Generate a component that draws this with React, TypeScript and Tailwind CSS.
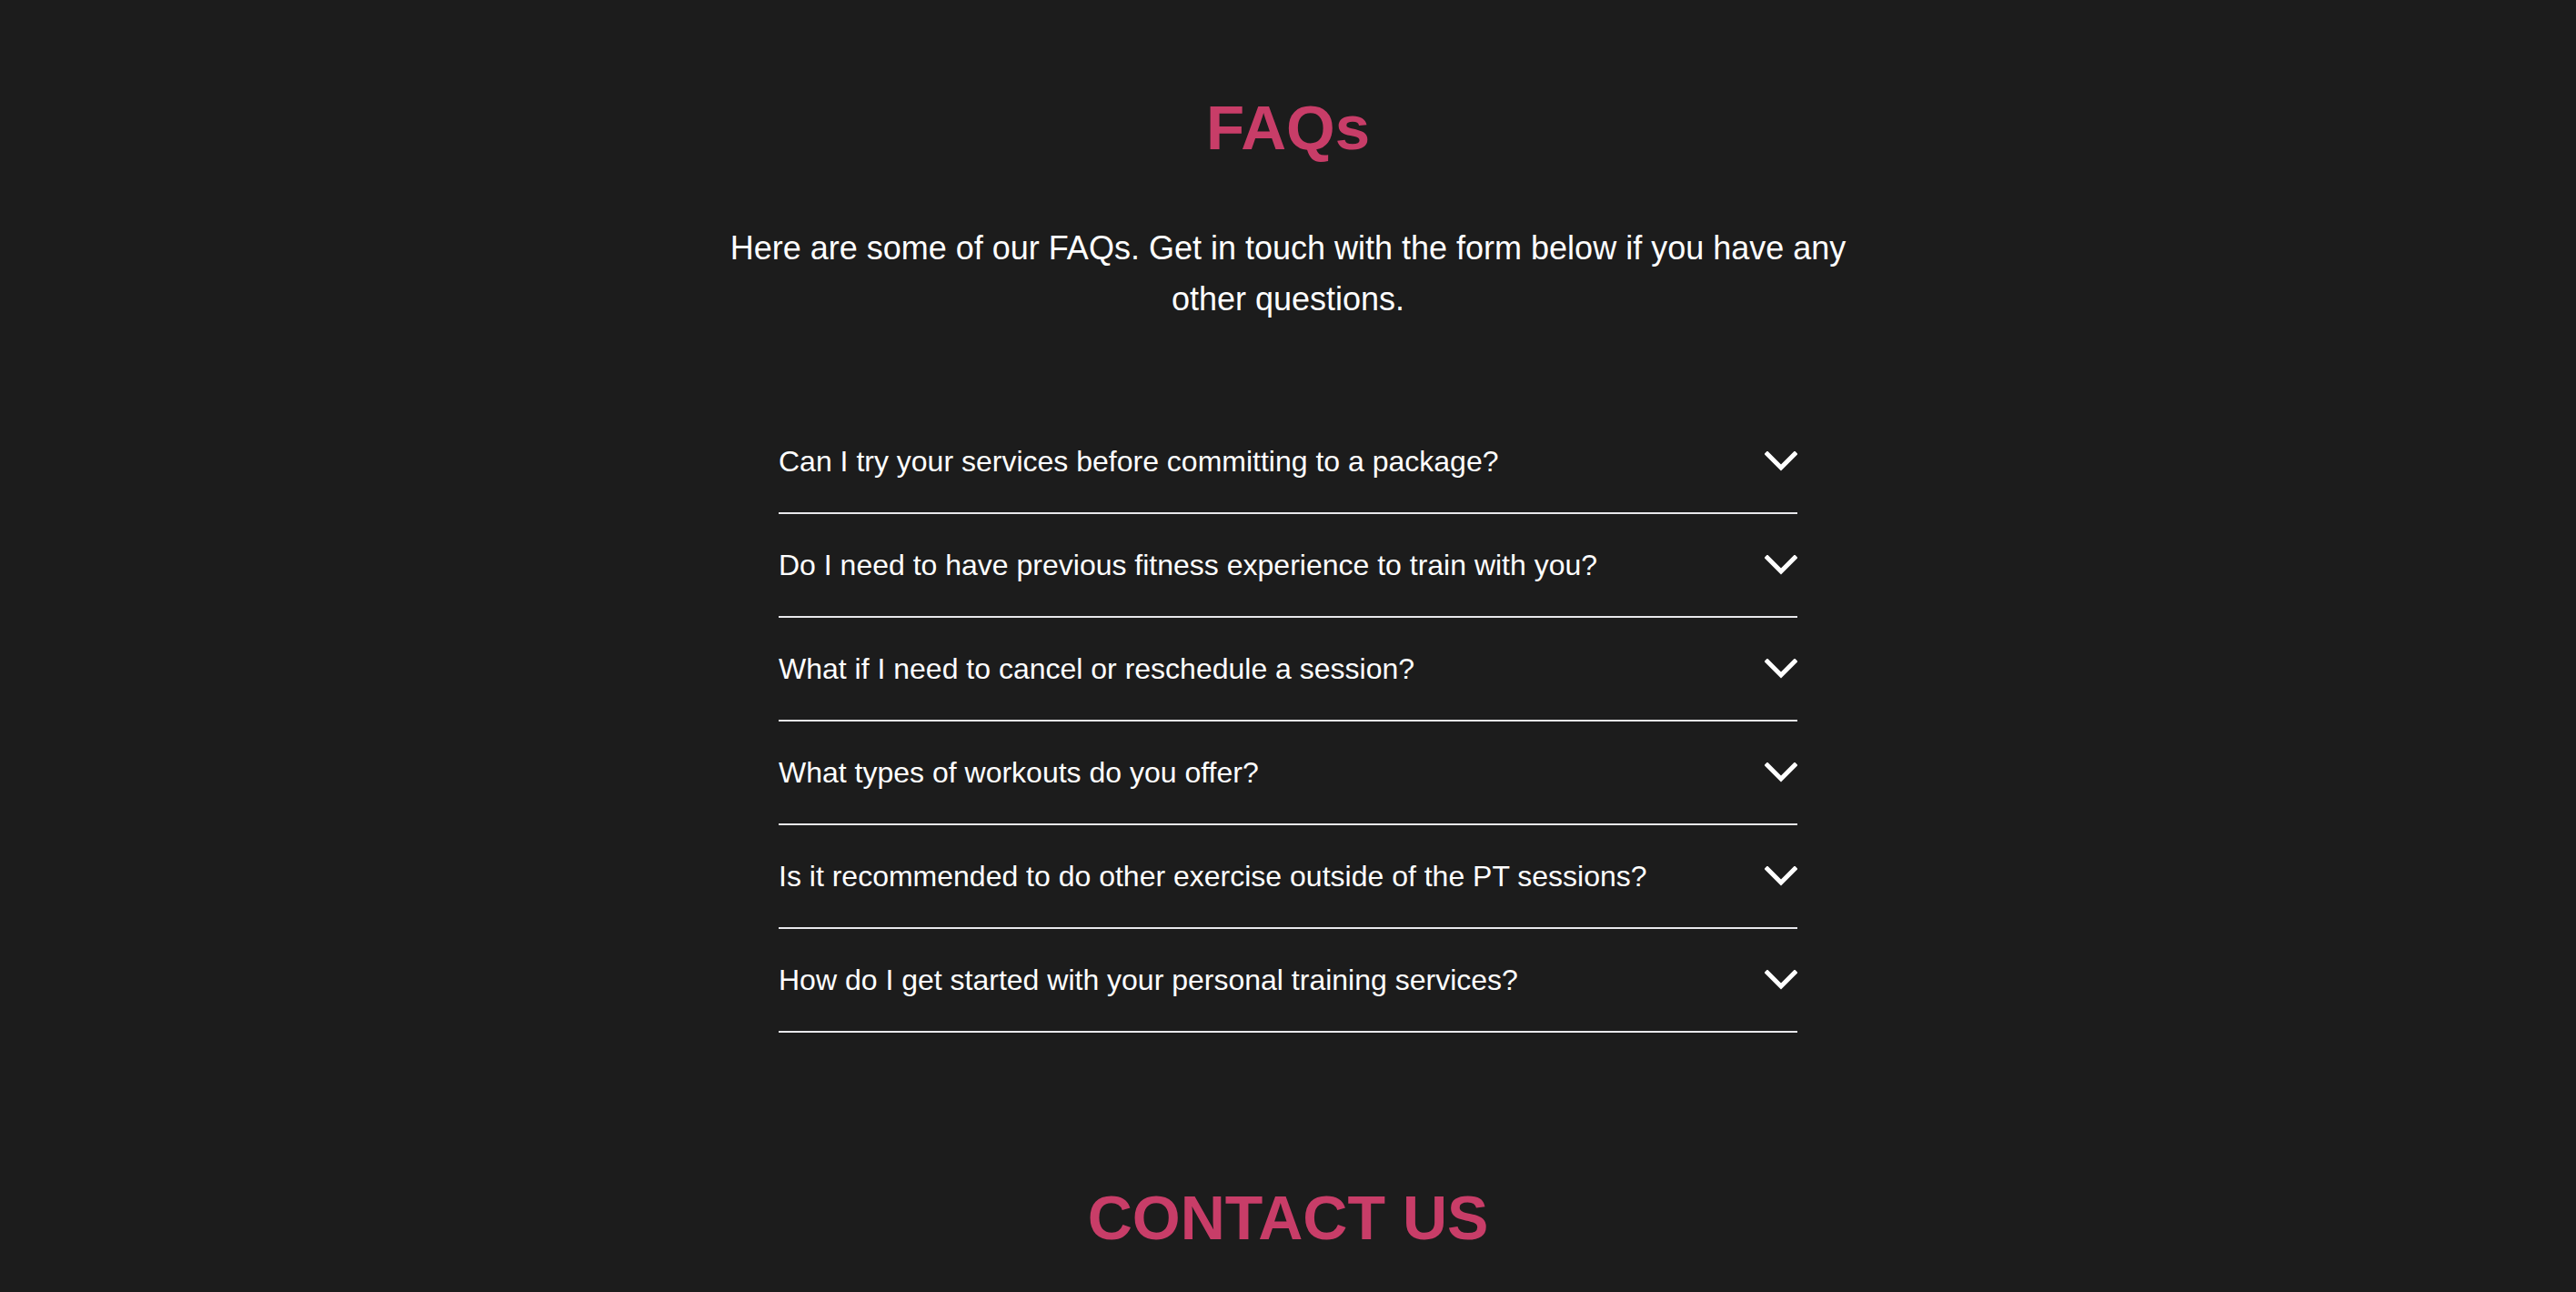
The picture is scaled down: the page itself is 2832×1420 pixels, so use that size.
import { useState } from "react";

const faqs = [
    "Can I try your services before committing to a package?",
    "Do I need to have previous fitness experience to train with you?",
    "What if I need to cancel or reschedule a session?",
    "What types of workouts do you offer?",
    "Is it recommended to do other exercise outside of the PT sessions?",
    "How do I get started with your personal training services?",
];

const Chevron = () => (
    <svg width="36" height="22" viewBox="0 0 36 22" fill="none" className="shrink-0">
        <polyline points="3,3 18,18 33,3" stroke="white" strokeWidth="5" strokeLinecap="square" strokeLinejoin="miter" />
    </svg>
);

const FaqRow = ({ question }: { question: string }) => {
    const [open, setOpen] = useState(false);
    return (
        <div className="border-b-2 border-[#e8e8ec]">
            <button
                onClick={() => setOpen(!open)}
                className="w-full flex items-center justify-between py-[40px] text-left cursor-pointer"
            >
                <span className="text-[32px] leading-[32px] text-white">{question}</span>
                <Chevron />
            </button>
        </div>
    );
};

export default function App() {
    return (
        <div className="min-h-[1420px] w-full bg-[#1c1c1c] font-['Liberation_Sans',Arial,sans-serif] overflow-hidden">
            <section className="flex flex-col items-center pt-[105px]">
                <h2 className="text-[69px] leading-[72px] font-bold text-[#c83d68]">FAQs</h2>
                <p className="mt-[68px] max-w-[1270px] text-center text-[36px] leading-[56px] text-white">
                    Here are some of our FAQs. Get in touch with the form below if you have any other questions.
                </p>
                <div className="mt-[94px] w-[1120px] flex flex-col">
                    {faqs.map((q) => (
                        <FaqRow key={q} question={q} />
                    ))}
                </div>
                <h2 className="mt-[167px] text-[68px] leading-[72px] font-bold text-[#c83d68]">CONTACT US</h2>
            </section>
        </div>
    );
}
